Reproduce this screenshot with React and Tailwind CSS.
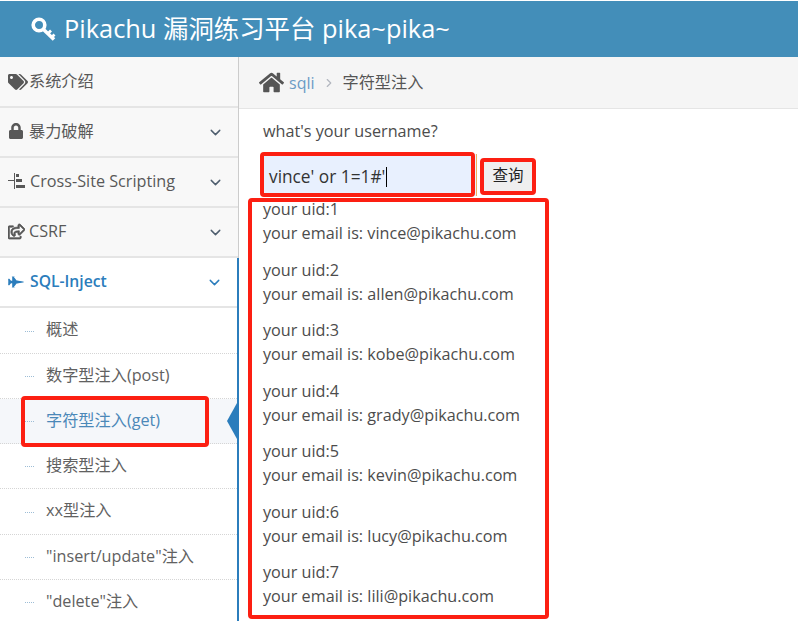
import React from "react";
import { FaTags, FaLock, FaRegShareSquare, FaFighterJet, FaHome } from "react-icons/fa";
import { ChevronDown, ChevronRight } from "lucide-react";

const cjk = "font-['Open_Sans','Noto_Sans_CJK_SC',sans-serif]";

const subItems = [
  { label: "概述", h: "h-[46px]" },
  { label: "数字型注入(post)", h: "h-[45px]" },
  { label: "字符型注入(get)", h: "h-[45px]", active: true },
  { label: "搜索型注入", h: "h-[45px]" },
  { label: "xx型注入", h: "h-[46px]" },
  { label: "\"insert/update\"注入", h: "h-[45px]" },
  { label: "\"delete\"注入", h: "h-[45px]" },
];

const results = [
  ["1", "vince"],
  ["2", "allen"],
  ["3", "kobe"],
  ["4", "grady"],
  ["5", "kevin"],
  ["6", "lucy"],
  ["7", "lili"],
];

const KeyIcon = () => (
  <svg width="25" height="25" viewBox="0 0 25 25" fill="none" stroke="white">
    <circle cx="8" cy="8" r="5.8" strokeWidth="3.6" />
    <path d="M11.5 11.5 L23 22.5" strokeWidth="3.6" />
    <path d="M16.5 17 L20 13.5 M20.5 20.5 L23.5 17.5" strokeWidth="2.8" />
  </svg>
);

const SitemapIcon = () => (
  <svg width="17" height="16" viewBox="0 0 17 16" fill="#585858">
    <rect x="0" y="7" width="6" height="1" />
    <rect x="6" y="0" width="1" height="16" />
    <rect x="8" y="1" width="3" height="3" />
    <rect x="8" y="6" width="6" height="3" />
    <rect x="8" y="12" width="9" height="3" />
  </svg>
);

const MenuRow = ({ icon, label, chevron = true, open = false, gap = "gap-[6px]", h = "h-[50px]", lift = "pb-[2px]" }) => (
  <div
    className={`flex ${h} items-center border-b-2 border-[#e5e5e5] pl-[8px] pr-[14px] ${
      open ? "bg-white text-[#2b7dbc] font-semibold" : "bg-[#f8f8f8] text-[#585858]"
    }`}
  >
    <span className={`flex items-center ${gap} ${lift} ${open ? "text-[15.7px]" : "text-[16.2px]"} leading-none`}>
      {icon}
      {label}
    </span>
    {chevron && (
      <ChevronDown size={17} strokeWidth={2} className="ml-auto" color={open ? "#2b7dbc" : "#4f5f6f"} />
    )}
  </div>
);

const App = () => {
  return (
    <div className={`relative h-[621px] w-[798px] overflow-hidden bg-white ${cjk}`}>
      {/* top bar */}
      <div className="mt-[1px] flex h-[56px] items-center bg-[#438eb9] pl-[31px] text-white">
        <KeyIcon />
        <span className="ml-[8px] text-[25.4px] leading-none">Pikachu 漏洞练习平台 pika~pika~</span>
      </div>

      <div className="flex h-[564px]">
        {/* sidebar */}
        <div className="w-[239px] shrink-0 overflow-hidden">
          <div className="border-r border-[#cccccc]">
            <MenuRow icon={<FaTags size={20} color="#585858" className="-mr-[5px]" />} label="系统介绍" chevron={false} h="h-[51px]" lift="pb-0" />
            <MenuRow icon={<FaLock size={16} color="#585858" />} label="暴力破解" gap="gap-[5px]" />
            <MenuRow icon={<SitemapIcon />} label="Cross-Site Scripting" gap="gap-[5px]" />
            <MenuRow icon={<FaRegShareSquare size={17} color="#585858" stroke="#585858" strokeWidth={24} />} label="CSRF" gap="gap-[4px]" />
          </div>
          <div className="border-r-2 border-[#2b7dbc]">
            <MenuRow icon={<FaFighterJet size={16} color="#2b7dbc" />} label="SQL-Inject" open lift="pb-0" />
            <div className="relative">
              <div className="absolute left-[23px] top-0 bottom-0 border-l border-dotted border-[#9dbdd6]" />
              {subItems.map((item) => (
                <div
                  key={item.label}
                  className={`relative flex ${item.h} items-center border-b border-dotted border-[#d5d5d5] pb-[2px] pl-[46px] text-[16.2px] ${
                    item.active ? "bg-[#f5f7fa] text-[#4b88b8]" : "bg-white text-[#616161]"
                  }`}
                >
                  <span className="absolute left-[25px] top-1/2 w-[9px] border-t border-dotted border-[#9dbdd6]" />
                  {item.label}
                  {item.active && (
                    <span className="absolute right-0 top-1/2 -translate-y-1/2 border-y-[18px] border-r-[10px] border-y-transparent border-r-[#2b7dbc]" />
                  )}
                </div>
              ))}
            </div>
          </div>
        </div>

        {/* main */}
        <div className="min-w-0 flex-1">
          <div className="flex h-[52px] items-center border-b border-[#e5e5e5] bg-[#f5f5f5] pl-[20px]">
            <FaHome size={25} color="#555555" />
            <span className="ml-[5px] text-[16px] text-[#6a9bc5]">sqli</span>
            <ChevronRight size={14} color="#b2b6bf" strokeWidth={2} className="ml-[7px]" />
            <span className="ml-[7px] text-[16.2px] text-[#555555]">字符型注入</span>
          </div>

          <div className="pl-[24px] text-[16.2px] text-[#4c4c4c]">
            <p className="mt-[10px] leading-[24px]">what's your username?</p>
            <div className="mt-[11px] flex items-center">
              <div className="flex h-[42px] w-[214px] items-center border-r border-[#f0b060] bg-[#e8f0fe] pl-[6px] pt-[3px] text-[17.3px] text-[#333333]">
                vince' or 1=1#'
                <span className="ml-[1px] h-[20px] w-[1px] bg-black" />
              </div>
              <button className="ml-[7px] mt-[2px] h-[32px] w-[48px] rounded-[2px] bg-[#efefef] text-[15.5px] text-[#222222]">
                查询
              </button>
            </div>
            <div className="mt-[1px]">
              {results.map(([uid, name], i) => (
                <div key={uid} className={i === 0 ? "" : "mt-[12.5px]"}>
                  <p className="leading-[24px]">your uid:{uid}</p>
                  <p className="leading-[24px]">your email is: {name}@pikachu.com</p>
                </div>
              ))}
            </div>
          </div>
        </div>
      </div>

      {/* red annotation boxes */}
      <div className="absolute left-[21px] top-[396px] h-[51px] w-[188px] rounded-[4px] border-[4px] border-[#fc1f12]" />
      <div className="absolute left-[260px] top-[152px] h-[45px] w-[215px] rounded-[4px] border-[4px] border-[#fc1f12]" />
      <div className="absolute left-[480px] top-[158px] h-[37px] w-[56px] rounded-[4px] border-[4px] border-[#fc1f12]" />
      <div className="absolute left-[248px] top-[198px] h-[421px] w-[301px] rounded-[4px] border-[4px] border-[#fc1f12]" />
    </div>
  );
};

export default App;
